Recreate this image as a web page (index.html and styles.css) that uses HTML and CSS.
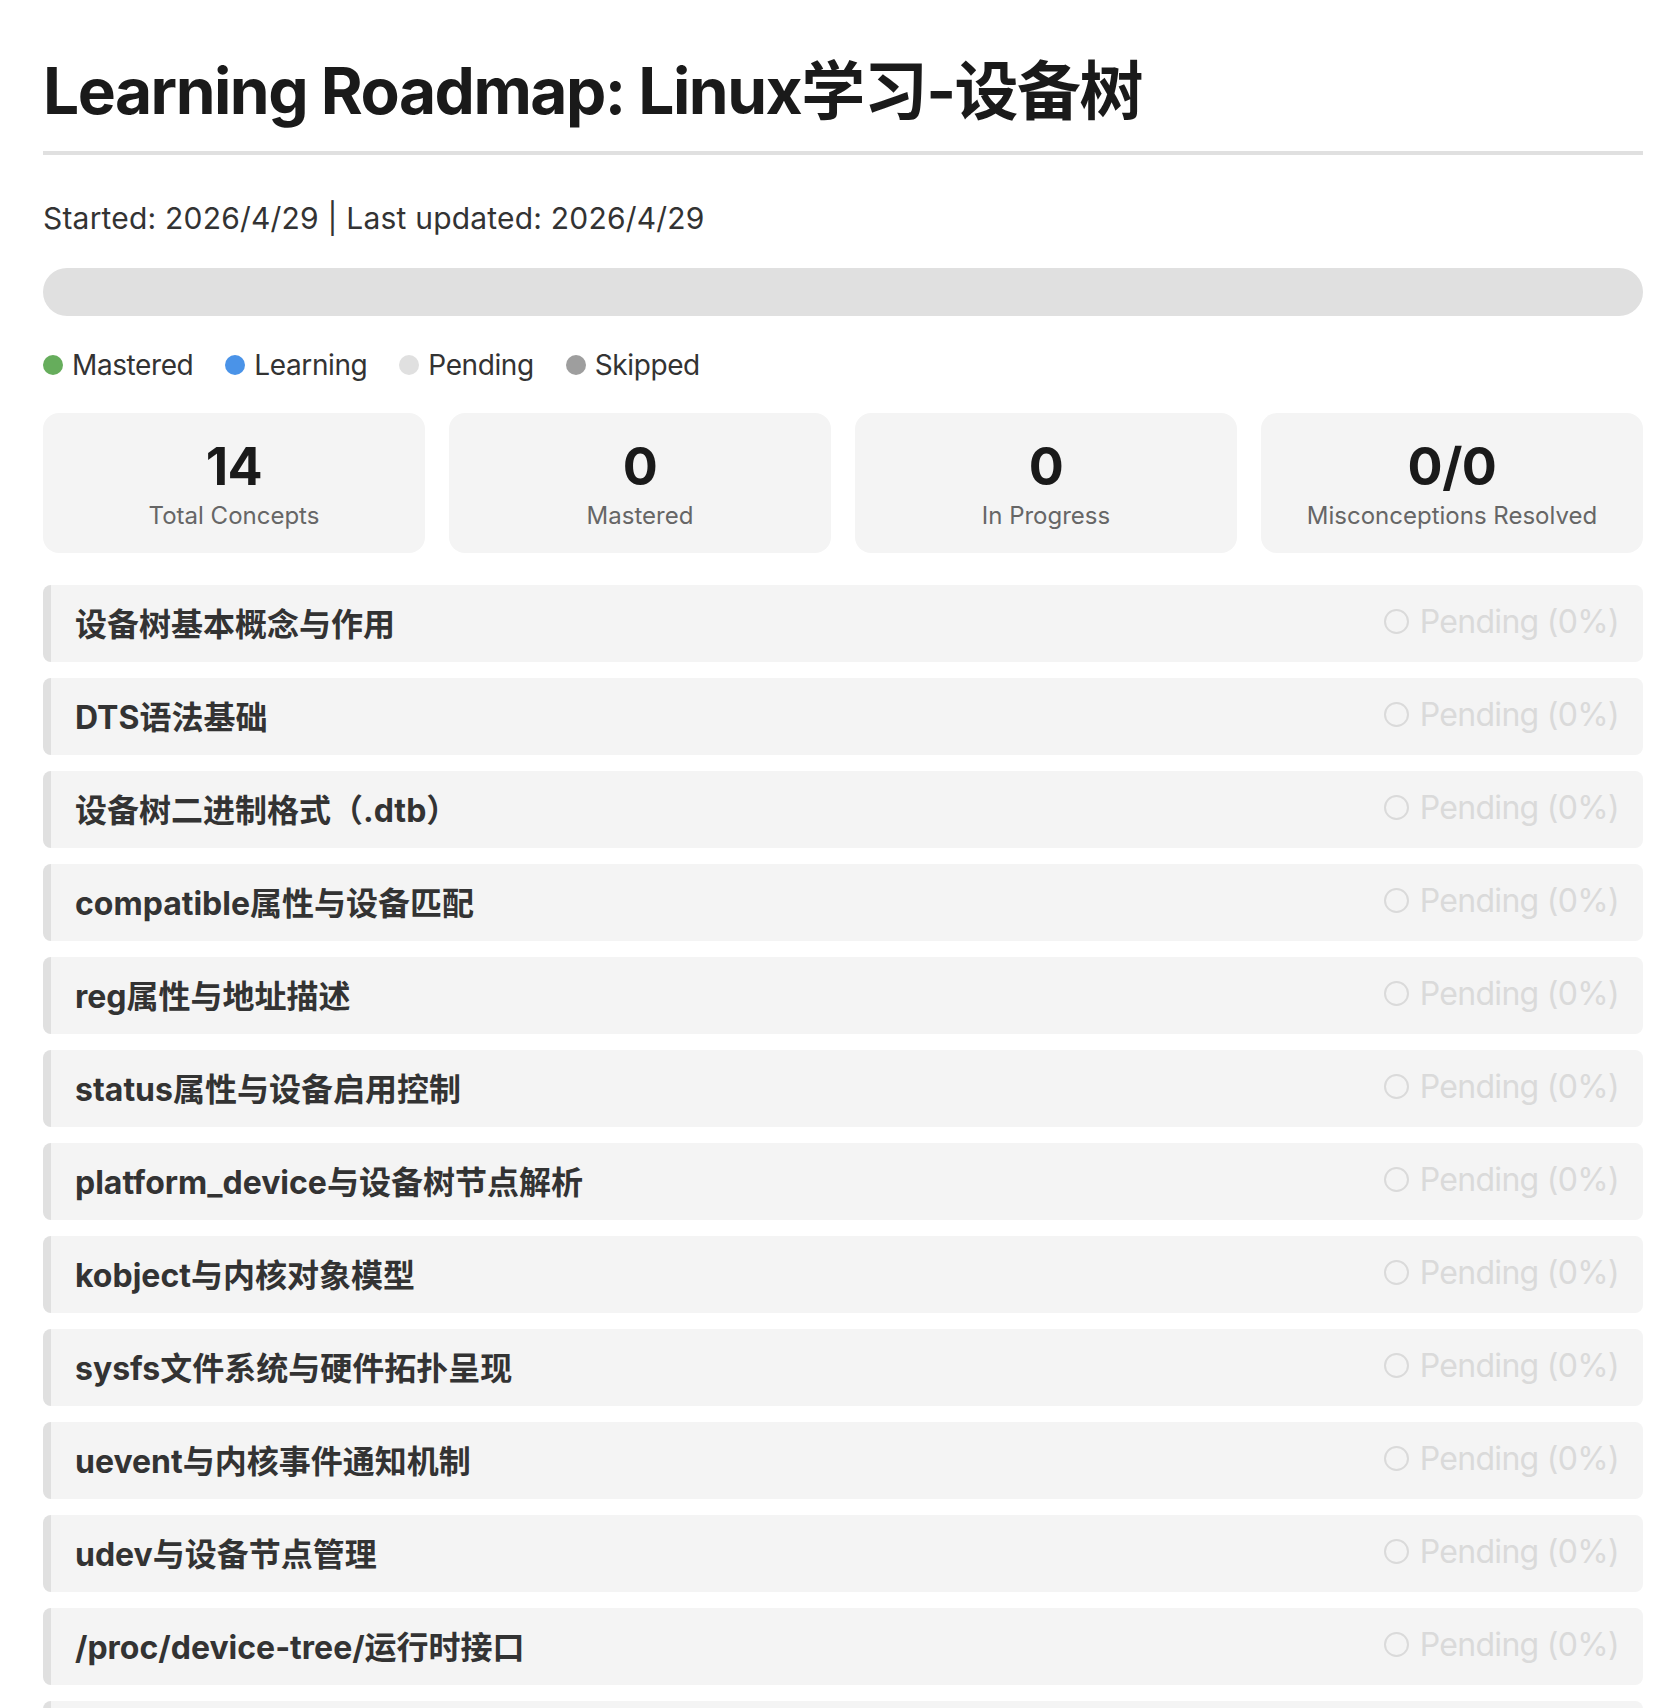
FILE: index.html
```html
<!DOCTYPE html>
<html lang="zh-CN">
<head>
    <meta charset="UTF-8">
    <meta name="viewport" content="width=device-width, initial-scale=1.0">
    <title>Learning Roadmap: Linux学习-设备树</title>
    <link rel="stylesheet" href="styles.css">
</head>
<body>

<main class="roadmap">
    <!-- Title -->
    <h1 class="roadmap-title">Learning Roadmap: Linux学习-设备树</h1>
    <p class="meta">Started: 2026/4/29 | Last updated: 2026/4/29</p>

    <!-- Overall progress -->
    <div class="progress">
        <div class="progress-fill" style="width: 0%"></div>
    </div>

    <div class="legend">
        <span class="legend-item"><span class="dot dot-mastered"></span>Mastered</span>
        <span class="legend-item"><span class="dot dot-learning"></span>Learning</span>
        <span class="legend-item"><span class="dot dot-pending"></span>Pending</span>
        <span class="legend-item"><span class="dot dot-skipped"></span>Skipped</span>
    </div>

    <!-- Stats -->
    <div class="stats">
        <div class="stat">
            <div class="stat-value">14</div>
            <div class="stat-label">Total Concepts</div>
        </div>
        <div class="stat">
            <div class="stat-value">0</div>
            <div class="stat-label">Mastered</div>
        </div>
        <div class="stat">
            <div class="stat-value">0</div>
            <div class="stat-label">In Progress</div>
        </div>
        <div class="stat">
            <div class="stat-value">0/0</div>
            <div class="stat-label">Misconceptions Resolved</div>
        </div>
    </div>

    <!-- Concept list -->
    <div class="concepts">
        <div class="concept pending">
            <span class="concept-name">设备树基本概念与作用</span>
            <span class="concept-status"><span class="ring"></span>Pending (0%)</span>
        </div>
        <div class="concept pending">
            <span class="concept-name">DTS语法基础</span>
            <span class="concept-status"><span class="ring"></span>Pending (0%)</span>
        </div>
        <div class="concept pending">
            <span class="concept-name">设备树二进制格式（.dtb）</span>
            <span class="concept-status"><span class="ring"></span>Pending (0%)</span>
        </div>
        <div class="concept pending">
            <span class="concept-name">compatible属性与设备匹配</span>
            <span class="concept-status"><span class="ring"></span>Pending (0%)</span>
        </div>
        <div class="concept pending">
            <span class="concept-name">reg属性与地址描述</span>
            <span class="concept-status"><span class="ring"></span>Pending (0%)</span>
        </div>
        <div class="concept pending">
            <span class="concept-name">status属性与设备启用控制</span>
            <span class="concept-status"><span class="ring"></span>Pending (0%)</span>
        </div>
        <div class="concept pending">
            <span class="concept-name">platform_device与设备树节点解析</span>
            <span class="concept-status"><span class="ring"></span>Pending (0%)</span>
        </div>
        <div class="concept pending">
            <span class="concept-name">kobject与内核对象模型</span>
            <span class="concept-status"><span class="ring"></span>Pending (0%)</span>
        </div>
        <div class="concept pending">
            <span class="concept-name">sysfs文件系统与硬件拓扑呈现</span>
            <span class="concept-status"><span class="ring"></span>Pending (0%)</span>
        </div>
        <div class="concept pending">
            <span class="concept-name">uevent与内核事件通知机制</span>
            <span class="concept-status"><span class="ring"></span>Pending (0%)</span>
        </div>
        <div class="concept pending">
            <span class="concept-name">udev与设备节点管理</span>
            <span class="concept-status"><span class="ring"></span>Pending (0%)</span>
        </div>
        <div class="concept pending">
            <span class="concept-name">/proc/device-tree/运行时接口</span>
            <span class="concept-status"><span class="ring"></span>Pending (0%)</span>
        </div>
        <div class="concept pending">
            <span class="concept-name">设备树覆盖（Overlay）机制</span>
            <span class="concept-status"><span class="ring"></span>Pending (0%)</span>
        </div>
        <div class="concept pending">
            <span class="concept-name">设备树调试与实践</span>
            <span class="concept-status"><span class="ring"></span>Pending (0%)</span>
        </div>
    </div>
</main>

</body>
</html>
```

FILE: styles.css
```css
body {
    margin: 0;
    padding: 0;
    background-color: #fff;
    color: #333;
    font-family: Inter, "Noto Sans CJK SC", sans-serif;
}

.roadmap {
    width: 1600px;
    margin-left: 43px;
    padding-bottom: 40px;
}

/* Title */
.roadmap-title {
    font-size: 64px;
    line-height: 77px;
    font-weight: 700;
    color: #1a1a1a;
    margin: 52px 0 0;
    padding-bottom: 22px;
    border-bottom: 4px solid #e0e0e0;
    letter-spacing: -1.5px;
}

.meta {
    font-size: 30px;
    line-height: 40px;
    margin: 43px 0 0;
    color: #333;
    letter-spacing: 0.2px;
}

/* Progress bar */
.progress {
    height: 48px;
    margin-top: 30px;
    background-color: #e0e0e0;
    border-radius: 24px;
    overflow: hidden;
}

.progress-fill {
    height: 100%;
    background-color: #66ad5c;
}

/* Legend */
.legend {
    display: flex;
    gap: 32px;
    margin-top: 29px;
    font-size: 28px;
    line-height: 40px;
    color: #333;
    letter-spacing: -0.4px;
}

.legend-item {
    display: flex;
    align-items: center;
    gap: 9px;
}

.dot {
    width: 20px;
    height: 20px;
    border-radius: 50%;
    display: inline-block;
}

.dot-mastered { background-color: #66ad5c; }
.dot-learning { background-color: #4a93e8; }
.dot-pending { background-color: #e0e0e0; }
.dot-skipped { background-color: #9e9e9e; }

/* Stat cards */
.stats {
    display: grid;
    grid-template-columns: repeat(4, 1fr);
    gap: 24px;
    margin-top: 28px;
}

.stat {
    background-color: #f4f4f4;
    border-radius: 16px;
    padding: 24px 16px 22px;
    text-align: center;
}

.stat-value {
    font-size: 52px;
    line-height: 60px;
    font-weight: 700;
    color: #1a1a1a;
    letter-spacing: -0.5px;
}

.stat-label {
    font-size: 24px;
    line-height: 30px;
    margin-top: 4px;
    color: #666;
}

/* Concept rows */
.concepts {
    display: flex;
    flex-direction: column;
    gap: 16px;
    margin-top: 32px;
}

.concept {
    display: flex;
    align-items: center;
    justify-content: space-between;
    height: 77px;
    box-sizing: border-box;
    padding: 0 24px 4px;
    background-color: #f4f4f4;
    border-left: 8px solid #e0e0e0;
    border-radius: 8px;
}

.concept-name {
    font-size: 32px;
    font-weight: 700;
    color: #333;
}

.concept-status {
    display: flex;
    align-items: center;
    gap: 11px;
    font-size: 32px;
    color: #dadada;
    letter-spacing: -0.7px;
}

.ring {
    width: 21px;
    height: 21px;
    border: 2.5px solid #dadada;
    border-radius: 50%;
}
```
